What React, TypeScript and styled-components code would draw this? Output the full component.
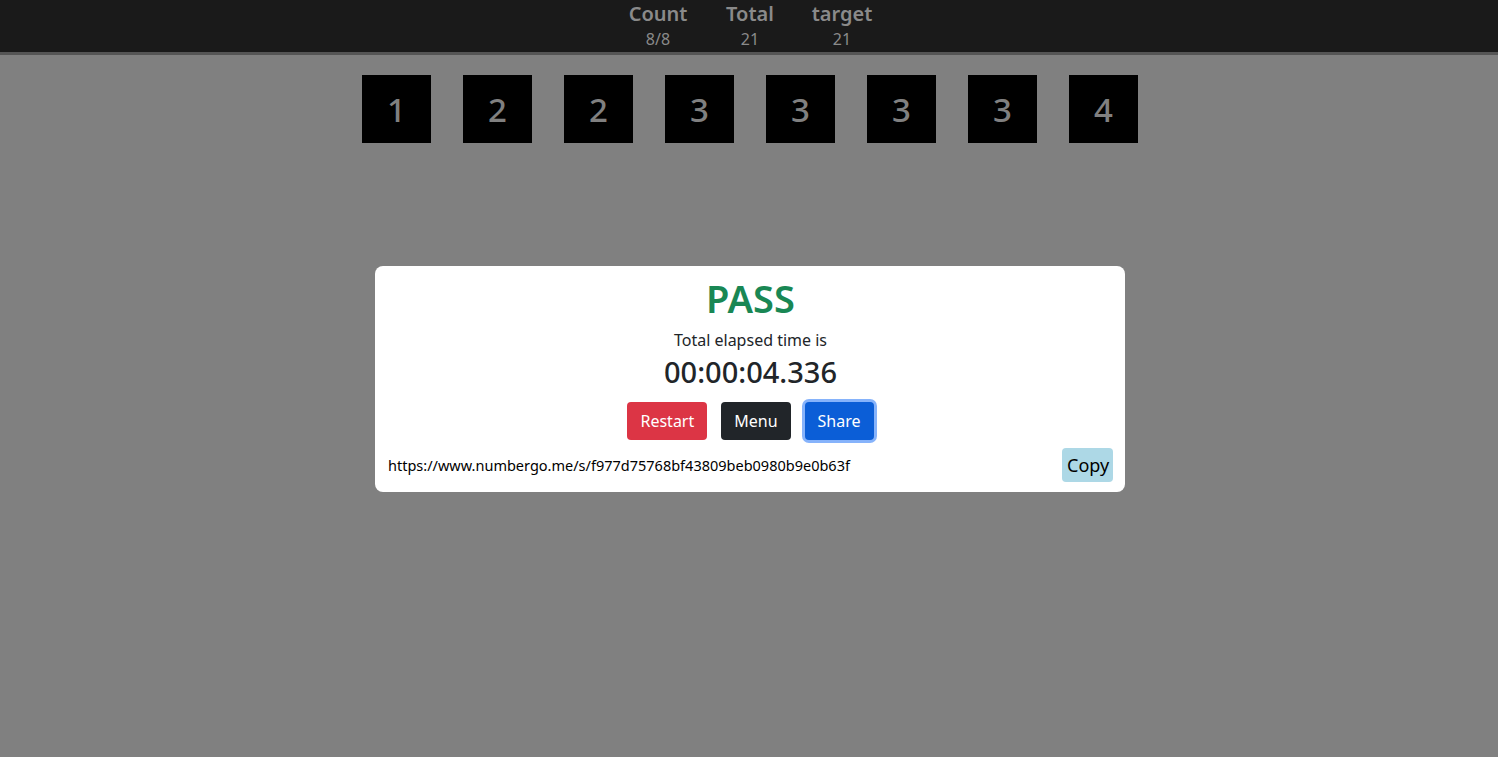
import React from "react";
import styled, { createGlobalStyle } from "styled-components";

const Global = createGlobalStyle`
  html, body { margin: 0; padding: 0; }
  body {
    background: #808080;
    font-family: "Noto Sans", "Open Sans", sans-serif;
    height: 757px;
    overflow: hidden;
  }
`;

const Page = styled.div`
  display: flex;
  flex-direction: column;
  align-items: center;
  width: 1500px;
  height: 757px;
`;

const TopBar = styled.header`
  width: 100%;
  height: 52px;
  background: #1a1a1a;
  border-bottom: 3px solid #555;
  display: flex;
  justify-content: center;
`;

const Stat = styled.div<{ $w: number }>`
  width: ${(p) => p.$w}px;
  display: flex;
  flex-direction: column;
  align-items: center;
  color: #8a8a8a;
`;

const StatLabel = styled.div`
  font-size: 20px;
  font-weight: 600;
  line-height: 28px;
`;

const StatValue = styled.div`
  font-size: 16px;
  line-height: 20px;
  margin-top: 1px;
`;

const Tiles = styled.div`
  display: flex;
  gap: 32px;
  margin-top: 20px;
`;

const Tile = styled.div`
  width: 69px;
  height: 68px;
  background: #000;
  color: #808080;
  font-size: 33px;
  font-weight: 500;
  display: flex;
  align-items: center;
  justify-content: center;
`;

const Modal = styled.div`
  margin-top: 123px;
  width: 750px;
  box-sizing: border-box;
  background: #fff;
  border-radius: 8px;
  padding: 8px 12px 10px 13px;
  display: flex;
  flex-direction: column;
  align-items: center;
  color: #212529;
`;

const Title = styled.h1`
  margin: 0;
  font-size: 38px;
  font-weight: 600;
  line-height: 48px;
  color: #198754;
`;

const Sub = styled.div`
  font-size: 16px;
  line-height: 24px;
  margin-top: 6px;
`;

const Time = styled.div`
  font-size: 29px;
  font-weight: 500;
  line-height: 36px;
  margin-top: 2px;
`;

const Buttons = styled.div`
  display: flex;
  gap: 14px;
  margin-top: 12px;
`;

const Btn = styled.button<{ $bg: string; $ring?: boolean }>`
  font-family: inherit;
  font-size: 16px;
  line-height: 24px;
  padding: 7px 13px;
  border: none;
  border-radius: 4px;
  color: #fff;
  background: ${(p) => p.$bg};
  box-shadow: ${(p) => (p.$ring ? "0 0 0 3px #86b3fb" : "none")};
`;

const UrlRow = styled.div`
  width: 100%;
  display: flex;
  align-items: center;
  justify-content: space-between;
  margin-top: 8px;
`;

const Url = styled.div`
  font-family: "Noto Sans", sans-serif;
  font-size: 14.5px;
  color: #000;
`;

const CopyBtn = styled.button`
  font-family: inherit;
  font-size: 18px;
  line-height: 24px;
  padding: 5px 5px;
  width: 51px;
  height: 34px;
  border: none;
  border-radius: 4px;
  background: #add8e6;
  color: #000;
`;

export default function App() {
  const tiles = [1, 2, 2, 3, 3, 3, 3, 4];
  return (
    <>
      <Global />
      <Page>
        <TopBar>
          <Stat $w={92}>
            <StatLabel>Count</StatLabel>
            <StatValue>8/8</StatValue>
          </Stat>
          <Stat $w={92}>
            <StatLabel>Total</StatLabel>
            <StatValue>21</StatValue>
          </Stat>
          <Stat $w={92}>
            <StatLabel>target</StatLabel>
            <StatValue>21</StatValue>
          </Stat>
        </TopBar>
        <Tiles>
          {tiles.map((n, i) => (
            <Tile key={i}>{n}</Tile>
          ))}
        </Tiles>
        <Modal>
          <Title>PASS</Title>
          <Sub>Total elapsed time is</Sub>
          <Time>00:00:04.336</Time>
          <Buttons>
            <Btn $bg="#dc3545">Restart</Btn>
            <Btn $bg="#212529">Menu</Btn>
            <Btn $bg="#0b5ed7" $ring>
              Share
            </Btn>
          </Buttons>
          <UrlRow>
            <Url>https://www.numbergo.me/s/f977d75768bf43809beb0980b9e0b63f</Url>
            <CopyBtn>Copy</CopyBtn>
          </UrlRow>
        </Modal>
      </Page>
    </>
  );
}
